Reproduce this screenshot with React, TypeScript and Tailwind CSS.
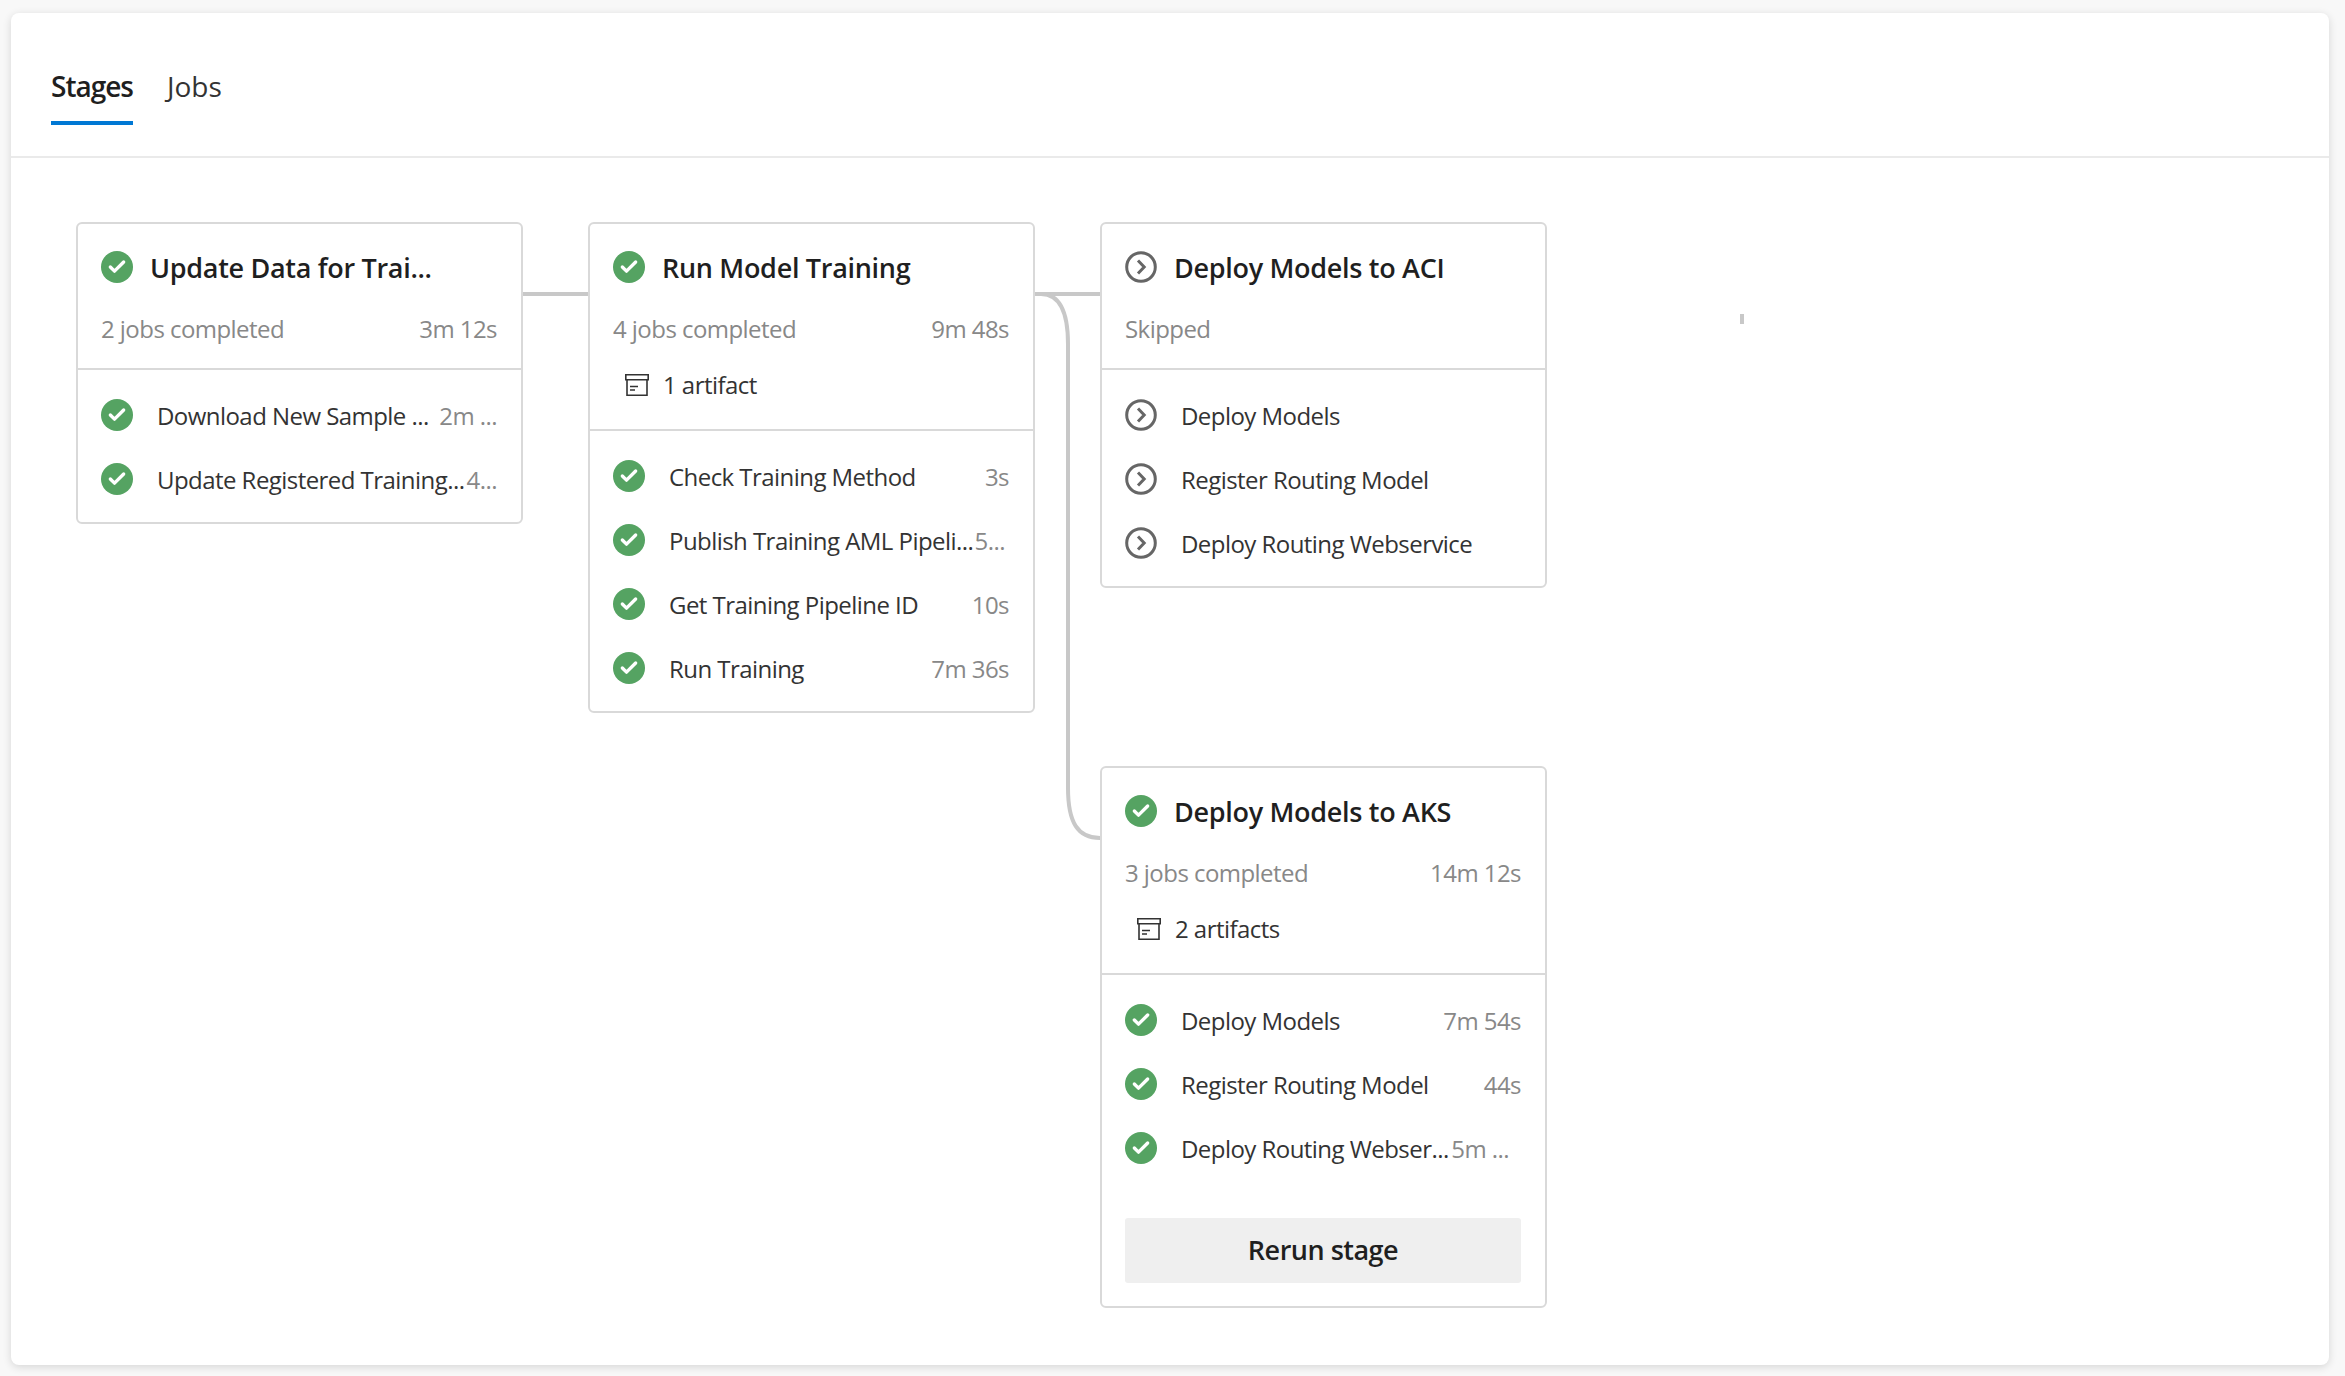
import { Check } from "lucide-react"

type Job = { name: string; time?: string; timeClass?: string }

type Stage = {
  title: string
  status: "done" | "skipped"
  meta: string
  total?: string
  artifact?: string
  jobs: Job[]
  rerun?: boolean
}

const stages: Record<string, Stage> = {
  data: {
    title: "Update Data for Trai...",
    status: "done",
    meta: "2 jobs completed",
    total: "3m 12s",
    jobs: [
      { name: "Download New Sample ...", time: "2m ..." },
      { name: "Update Registered Training...", time: "4..." },
    ],
  },
  training: {
    title: "Run Model Training",
    status: "done",
    meta: "4 jobs completed",
    total: "9m 48s",
    artifact: "1 artifact",
    jobs: [
      { name: "Check Training Method", time: "3s" },
      { name: "Publish Training AML Pipeli...", time: "5...", timeClass: "pr-[4px]" },
      { name: "Get Training Pipeline ID", time: "10s" },
      { name: "Run Training", time: "7m 36s" },
    ],
  },
  aci: {
    title: "Deploy Models to ACI",
    status: "skipped",
    meta: "Skipped",
    jobs: [
      { name: "Deploy Models" },
      { name: "Register Routing Model" },
      { name: "Deploy Routing Webservice" },
    ],
  },
  aks: {
    title: "Deploy Models to AKS",
    status: "done",
    meta: "3 jobs completed",
    total: "14m 12s",
    artifact: "2 artifacts",
    rerun: true,
    jobs: [
      { name: "Deploy Models", time: "7m 54s" },
      { name: "Register Routing Model", time: "44s" },
      { name: "Deploy Routing Webser...", time: "5m ...", timeClass: "pr-[12px]" },
    ],
  },
}

function DoneIcon() {
  return (
    <span className="flex h-8 w-8 shrink-0 items-center justify-center rounded-full bg-[#55a362]">
      <Check size={20} strokeWidth={4} className="text-white" />
    </span>
  )
}

function SkippedIcon() {
  return (
    <svg width="32" height="32" viewBox="0 0 32 32" fill="none" className="shrink-0">
      <circle cx="16" cy="16" r="14.3" stroke="#666666" strokeWidth="3" />
      <path d="M13 9.5l6.2 6.5-6.2 6.5" stroke="#666666" strokeWidth="3" />
    </svg>
  )
}

function ArtifactIcon() {
  return (
    <svg width="24" height="22" viewBox="0 0 24 22" fill="none" className="shrink-0" stroke="#333333" strokeWidth="1.6">
      <path d="M.8.8h22.4v5H.8z" />
      <path d="M2 5.8v15.4h20V5.8" />
      <path d="M5 12.5h8M5 16h5" />
    </svg>
  )
}

function StatusIcon({ status }: { status: Stage["status"] }) {
  return status === "done" ? <DoneIcon /> : <SkippedIcon />
}

function StageCard({ stage }: { stage: Stage }) {
  return (
    <div className="w-[447px] rounded-[6px] border-2 border-[#d9d9d9] bg-white">
      <div className={`border-b-2 border-[#d9d9d9] pl-[23px] pr-[24px] pt-[24px] ${stage.artifact ? "pb-[28px]" : "pb-[23px]"}`}>
        <div className="flex h-10 items-center gap-[17px]">
          <span className="-mt-[2px]">
            <StatusIcon status={stage.status} />
          </span>
          <span className="mt-[1px] whitespace-nowrap text-[27px] font-semibold tracking-[-0.3px] text-[#1f1f1f]">{stage.title}</span>
        </div>
        <div className="mt-[25px] flex h-8 items-center justify-between text-[24px] tracking-[-0.55px] text-[#888888]">
          <span>{stage.meta}</span>
          {stage.total && <span>{stage.total}</span>}
        </div>
        {stage.artifact && (
          <div className="mt-6 flex h-8 items-center gap-[14px] pl-3 text-[24px] tracking-[-0.55px] text-[#333333]">
            <ArtifactIcon />
            <span>{stage.artifact}</span>
          </div>
        )}
      </div>
      <div className={`pl-[23px] pr-[24px] pt-[14px] ${stage.rerun ? "pb-[23px]" : "pb-[10px]"}`}>
        {stage.jobs.map((job) => (
          <div key={job.name} className="flex h-16 items-center text-[24px] tracking-[-0.55px]">
            <span className="-mt-[2px]">
              <StatusIcon status={stage.status} />
            </span>
            <span className="ml-6 flex-1 whitespace-nowrap text-[#333333]">{job.name}</span>
            {job.time && <span className={`whitespace-nowrap text-[#888888] ${job.timeClass ?? ""}`}>{job.time}</span>}
          </div>
        ))}
        {stage.rerun && (
          <button className="mt-[37px] flex h-[65px] w-full items-center justify-center rounded-[3px] bg-[#efefef] text-[27px] font-semibold tracking-[-0.5px] text-[#1f1f1f]">
            Rerun stage
          </button>
        )}
      </div>
    </div>
  )
}

export default function App() {
  return (
    <div className="h-[1376px] w-[2345px] overflow-hidden bg-[#f8f8f8] pb-[11px] pl-[11px] pr-[16px] pt-[13px] font-['Open_Sans',sans-serif]">
      <div className="flex h-full flex-col rounded-[8px] bg-white shadow-[0_2px_8px_rgba(0,0,0,0.14)]">
        {/* Tabs */}
        <div className="flex h-[145px] gap-[34px] border-b-2 border-[#eaeaea] pl-10 pt-[51px] text-[28px] leading-[44px]">
          <div className="h-[61px] border-b-4 border-[#0078d4] font-semibold tracking-[-1px] text-[#1f1f1f]">Stages</div>
          <div className="text-[#333333]">Jobs</div>
        </div>

        {/* Stage graph */}
        <div className="relative flex flex-1 items-start gap-[65px] pl-[65px] pt-[64px]">
          <svg className="absolute inset-0 h-full w-full" fill="none" stroke="#c8c8c8" strokeWidth="4">
            <path d="M510 136H578" />
            <path d="M1022 136H1090" />
            <path d="M1022 136H1030C1047 136 1057 150 1057 186V630C1057 665 1067 680 1089 680" />
          </svg>
          <div className="absolute left-[1729px] top-[156px] h-[10px] w-1 bg-[#c8c8c8]" />

          <div className="relative">
            <StageCard stage={stages.data} />
          </div>
          <div className="relative">
            <StageCard stage={stages.training} />
          </div>
          <div className="relative flex flex-col gap-[178px]">
            <StageCard stage={stages.aci} />
            <StageCard stage={stages.aks} />
          </div>
        </div>
      </div>
    </div>
  )
}
